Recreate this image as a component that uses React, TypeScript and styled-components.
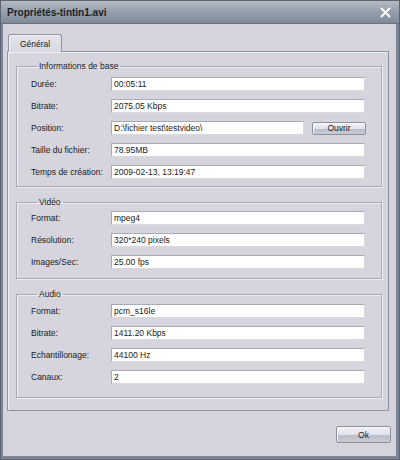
import React from "react";
import styled, { createGlobalStyle } from "styled-components";

const GlobalStyle = createGlobalStyle`
  html, body {
    margin: 0;
    padding: 0;
    background: #d5d4dc;
  }
  * {
    box-sizing: border-box;
  }
`;

const Window = styled.div`
  width: 400px;
  height: 460px;
  display: flex;
  flex-direction: column;
  background: #d5d4dc;
  border: 1px solid #5c6474;
  box-shadow: inset 1px 0 0 #9aa2b0, inset -1px 0 0 #9aa2b0, inset 0 -1px 0 #9aa2b0;
  font-family: "Liberation Sans", Arial, sans-serif;
  font-size: 8.5px;
  color: #1a1a1a;
  overflow: hidden;
`;

const TitleBar = styled.div`
  height: 23px;
  flex: none;
  display: flex;
  align-items: center;
  justify-content: space-between;
  padding: 0 8px 0 6px;
  background: linear-gradient(#b4bbc6, #98a1ae 45%, #7f8999);
  border-bottom: 1px solid #6a7384;
`;

const Title = styled.span`
  font-weight: bold;
  font-size: 10px;
  color: #1c1f26;
`;

const Close = styled.span`
  width: 12px;
  height: 12px;
  display: flex;
  align-items: center;
  justify-content: center;
`;

const Body = styled.div`
  flex: 1;
  display: flex;
  flex-direction: column;
  padding: 10px 5px 0 4px;
  border-left: 2px solid #7b8494;
  border-right: 3px solid #7b8494;
  border-bottom: 3px solid #7b8494;
`;

const TabStrip = styled.div`
  display: flex;
  padding-left: 1px;
`;

const Tab = styled.div`
  width: 54px;
  height: 18px;
  display: flex;
  align-items: center;
  justify-content: center;
  background: linear-gradient(#e4e4ea, #d8d8e0);
  border: 1px solid #8c94a4;
  border-bottom: none;
  border-radius: 3px 3px 0 0;
  box-shadow: inset 1px 1px 0 #f4f4f8;
  margin-bottom: -1px;
  position: relative;
  z-index: 1;
`;

const Panel = styled.div`
  width: 382px;
  height: 360px;
  display: flex;
  flex-direction: column;
  gap: 10px;
  padding: 9px 6px 0 8px;
  border: 1px solid #8c94a4;
  box-shadow: inset 1px 1px 0 #ececf2;
  background: #d6d5dd;
`;

const Group = styled.fieldset<{ $top: number; $bottom: number }>`
  margin: 0;
  width: 366px;
  padding: ${(p) => p.$top}px 0 ${(p) => p.$bottom}px 14px;
  border: 1px solid #a7abb6;
  box-shadow: inset 1px 1px 0 #eeeef2, 1px 1px 0 #eeeef2;
  display: flex;
  flex-direction: column;
  gap: 8px;
`;

const Legend = styled.legend`
  margin-left: 6px;
  padding: 0 2px;
  font-size: 8.5px;
  line-height: 10px;
`;

const Row = styled.div`
  display: flex;
  align-items: center;
  height: 14px;
`;

const Label = styled.span`
  width: 80px;
  flex: none;
`;

const Field = styled.div<{ $width?: number }>`
  width: ${(p) => p.$width ?? 254}px;
  height: 14px;
  flex: none;
  display: flex;
  align-items: center;
  padding-left: 2px;
  background: #fff;
  border: 1px solid #a9abb4;
  border-right-color: #d8d8de;
  border-bottom-color: #d8d8de;
  white-space: nowrap;
  overflow: hidden;
`;

const Button = styled.button<{ $width: number; $height: number }>`
  width: ${(p) => p.$width}px;
  height: ${(p) => p.$height}px;
  padding: 0;
  font-family: inherit;
  font-size: 8.5px;
  color: #1a1a1a;
  background: linear-gradient(#f2f2f6, #e2e3ea 50%, #b9bdca 52%, #c9ccd6);
  border: 1px solid #8a92a2;
  border-radius: 2px;
  box-shadow: inset 1px 1px 0 #fafafc;
`;

const Footer = styled.div`
  flex: 1;
  display: flex;
  justify-content: flex-end;
  align-items: flex-start;
  padding: 15px 0 0;
`;

type Item = { label: string; value: string };

const base: Item[] = [
  { label: "Durée:", value: "00:05:11" },
  { label: "Bitrate:", value: "2075.05 Kbps" },
  { label: "Position:", value: "D:\\fichier test\\testvideo\\" },
  { label: "Taille du fichier:", value: "78.95MB" },
  { label: "Temps de création:", value: "2009-02-13, 13:19:47" },
];

const video: Item[] = [
  { label: "Format:", value: "mpeg4" },
  { label: "Résolution:", value: "320*240 pixels" },
  { label: "Images/Sec:", value: "25.00 fps" },
];

const audio: Item[] = [
  { label: "Format:", value: "pcm_s16le" },
  { label: "Bitrate:", value: "1411.20 Kbps" },
  { label: "Echantillonage:", value: "44100 Hz" },
  { label: "Canaux:", value: "2" },
];

function Rows({ items }: { items: Item[] }) {
  return (
    <>
      {items.map((it) => (
        <Row key={it.label}>
          <Label>{it.label}</Label>
          {it.label === "Position:" ? (
            <>
              <Field $width={193}>{it.value}</Field>
              <Button $width={54} $height={13} style={{ marginLeft: 8 }}>
                Ouvrir
              </Button>
            </>
          ) : (
            <Field>{it.value}</Field>
          )}
        </Row>
      ))}
    </>
  );
}

export default function App() {
  return (
    <>
      <GlobalStyle />
      <Window>
        <TitleBar>
          <Title>Propriétés-tintin1.avi</Title>
          <Close>
            <svg width="11" height="11" viewBox="0 0 11 11">
              <path d="M1.5 1.5 L9.5 9.5 M9.5 1.5 L1.5 9.5" stroke="#fff" strokeWidth="2" strokeLinecap="round" />
            </svg>
          </Close>
        </TitleBar>
        <Body>
          <TabStrip>
            <Tab>Général</Tab>
          </TabStrip>
          <Panel>
            <Group $top={6} $bottom={7}>
              <Legend>Informations de base</Legend>
              <Rows items={base} />
            </Group>
            <Group $top={4} $bottom={9}>
              <Legend>Vidéo</Legend>
              <Rows items={video} />
            </Group>
            <Group $top={5} $bottom={13}>
              <Legend>Audio</Legend>
              <Rows items={audio} />
            </Group>
          </Panel>
          <Footer>
            <Button $width={55} $height={17}>Ok</Button>
          </Footer>
        </Body>
      </Window>
    </>
  );
}
